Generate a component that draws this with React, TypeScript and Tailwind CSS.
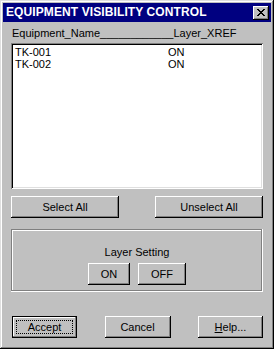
import React, { useState } from "react";

const raised =
  "bg-[#c0c0c0] shadow-[inset_-1px_-1px_#000,inset_1px_1px_#fff,inset_-2px_-2px_#808080,inset_2px_2px_#c0c0c0]";

// win95 close glyph, drawn pixel by pixel
const closeRows = ["11000011", "01100110", "00111100", "00011000", "00111100", "01100110", "11000011"];

function CloseGlyph() {
  return (
    <svg width="8" height="7" viewBox="0 0 8 7" shapeRendering="crispEdges">
      {closeRows.map((row, y) =>
        row.split("").map((c, x) =>
          c === "1" ? <rect key={`${x}-${y}`} x={x} y={y} width="1" height="1" fill="#000" /> : null,
        ),
      )}
    </svg>
  );
}

function Button({
  children,
  className = "",
  isDefault = false,
}: {
  children: React.ReactNode;
  className?: string;
  isDefault?: boolean;
}) {
  if (isDefault) {
    return (
      <button className={`relative h-[22px] border border-black bg-[#c0c0c0] shadow-[inset_-1px_-1px_#808080,inset_1px_1px_#fff] flex items-center justify-center text-[11px] text-black ${className}`}>
        <span className="absolute inset-[3px] border border-dotted border-black"></span>
        {children}
      </button>
    );
  }
  return (
    <button className={`h-[22px] ${raised} flex items-center justify-center text-[11px] text-black ${className}`}>
      {children}
    </button>
  );
}

const equipment = [
  { name: "TK-001", layer: "ON" },
  { name: "TK-002", layer: "ON" },
];

export default function App() {
  const [items] = useState(equipment);

  return (
    <div className="w-[274px] h-[349px] bg-[#c0c0c0] p-[3px] flex flex-col font-['Liberation_Sans',Arial,sans-serif] shadow-[inset_-1px_-1px_#000,inset_1px_1px_#dfdfdf,inset_-2px_-2px_#808080,inset_2px_2px_#fff]">
      <div className="h-[19px] bg-[#000080] flex items-center justify-between pl-[3px] pr-[2px]">
        <span className="text-white font-bold text-[12px] leading-[19px] tracking-[0.1px]">
          EQUIPMENT VISIBILITY CONTROL
        </span>
        <button className={`w-[16px] h-[14px] ${raised} flex items-center justify-center`}>
          <CloseGlyph />
        </button>
      </div>

      <div className="flex flex-col px-[8px]">
        <div className="mt-[5px] h-[13px] text-[11px] leading-[13px] pl-[1px] text-black whitespace-nowrap">
          Equipment_Name____________Layer_XREF
        </div>

        <div className="mt-[3px] h-[146px] bg-white shadow-[inset_1px_1px_#808080,inset_-1px_-1px_#fff,inset_2px_2px_#000,inset_-2px_-2px_#dfdfdf] pt-[3px] pl-[4px]">
          {items.map((it) => (
            <div key={it.name} className="flex text-[11px] leading-[12px] text-black">
              <span className="w-[153px]">{it.name}</span>
              <span>{it.layer}</span>
            </div>
          ))}
        </div>

        <div className="mt-[7px] flex justify-between">
          <Button className="w-[108px]">Select All</Button>
          <Button className="w-[108px]">Unselect All</Button>
        </div>

        <div className="mt-[11px] h-[63px] flex flex-col items-center pt-[17px] shadow-[inset_-1px_-1px_#fff,inset_1px_1px_#808080,inset_-2px_-2px_#808080,inset_2px_2px_#fff]">
          <div className="text-[11px] leading-[13px] text-black">Layer Setting</div>
          <div className="mt-[4px] flex gap-[8px]">
            <Button className="w-[42px]">ON</Button>
            <Button className="w-[48px]">OFF</Button>
          </div>
        </div>

        <div className="mt-[24px] pl-[1px] flex justify-between">
          <Button isDefault className="w-[65px]">Accept</Button>
          <Button className="w-[66px]">Cancel</Button>
          <Button className="w-[65px]">
            <span className="underline">H</span>elp...
          </Button>
        </div>
      </div>
    </div>
  );
}
